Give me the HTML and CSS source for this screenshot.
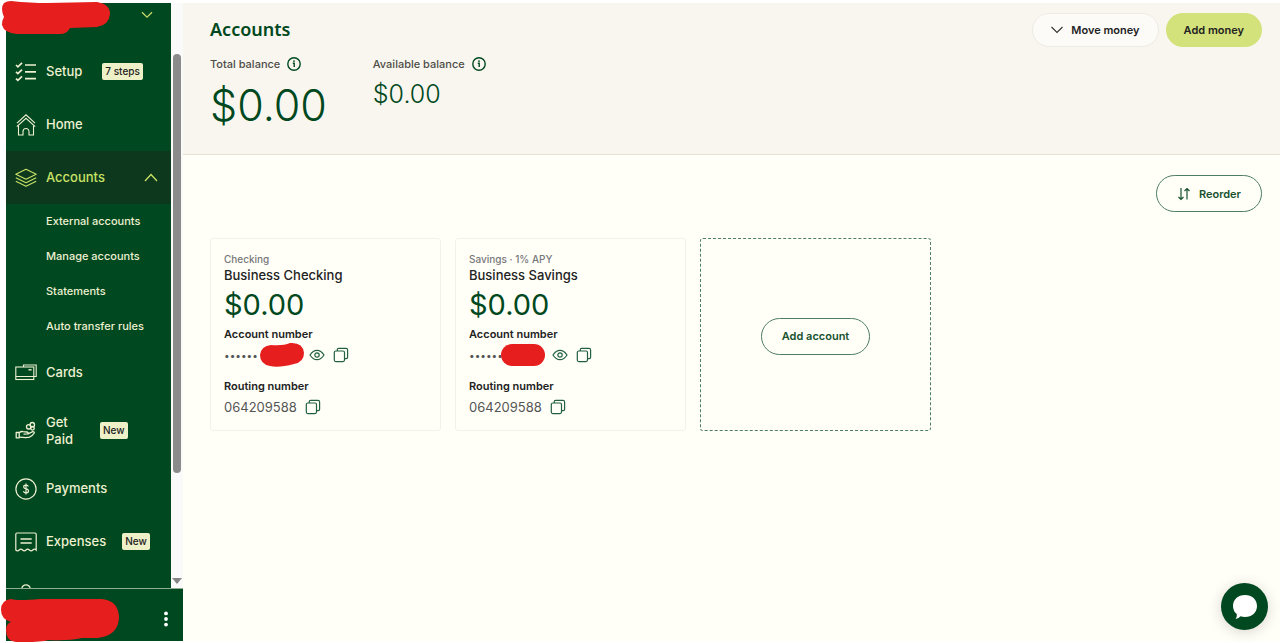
FILE: index.html
```html
<!DOCTYPE html>
<html lang="en">
<head>
<meta charset="utf-8">
<meta name="viewport" content="width=device-width, initial-scale=1">
<title>Accounts</title>
<link rel="stylesheet" href="styles.css">
</head>
<body>
<svg class="defs" width="0" height="0" aria-hidden="true">
  <symbol id="info" viewBox="0 0 14 14"><circle cx="7" cy="7" r="6.2" fill="none" stroke="currentColor" stroke-width="1.4"/><circle cx="7" cy="4.1" r=".9" fill="currentColor"/><path d="M5.8 6.3H7.2V10" fill="none" stroke="currentColor" stroke-width="1.4"/></symbol>
  <symbol id="eye" viewBox="0 0 16 16"><path d="M1 8Q4 3.3 8 3.3T15 8Q12 12.7 8 12.7T1 8Z" fill="none" stroke="currentColor" stroke-width="1.2"/><circle cx="8" cy="8" r="2.2" fill="none" stroke="currentColor" stroke-width="1.2"/></symbol>
  <symbol id="copy" viewBox="0 0 16 16"><rect x="1.3" y="4" width="10.2" height="10.6" rx="1.5" fill="none" stroke="currentColor" stroke-width="1.2"/><path d="M4.3 4V2.6Q4.3 1.3 5.6 1.3H13Q14.6 1.3 14.6 2.9V10.2Q14.6 11.6 13.2 11.6H11.5" fill="none" stroke="currentColor" stroke-width="1.2"/></symbol>
</svg>
<div class="app">
  <aside class="sidebar">
    <div class="scroller">
      <nav class="nav" aria-label="Main">
        <div class="company">
          <button class="plain" aria-label="Switch company"><svg width="12" height="8" viewBox="0 0 12 8"><path d="M1 1.2 6 6.2 11 1.2" fill="none" stroke="#c5dc68" stroke-width="1.3"/></svg></button>
          <svg class="mask mask-top" width="110" height="36" viewBox="0 0 110 36" aria-hidden="true"><path d="M10 1Q30 3 46 3L96 2Q109 4 109 14Q108 25 96 27L69 28Q66 34 59 34L16 34Q3 33 1 25Q1 20 3 17Q-1 8 3 3Q6 1 10 1Z" fill="#e61e1e"/></svg>
        </div>
        <a class="item" href="#">
          <svg class="icon" viewBox="0 0 22 22"><g fill="none" stroke="currentColor" stroke-width="1.7"><path d="M1 4 2.900 5.800 7 1.800M1 10.800 2.900 12.600 7 8.600M1 17.600 2.900 19.400 7 15.400"/><path d="M10 4H21M10 10.800H21M10 17.600H21"/></g></svg>
          <span class="label">Setup</span><span class="badge badge-far">7 steps</span>
        </a>
        <a class="item" href="#">
          <svg class="icon" viewBox="0 0 22 22"><g fill="none" stroke="currentColor" stroke-width="1.1"><path d="M2 9.200 11 .8 20 9.200"/><path d="M1.800 12.600 11 4.300 20.200 12.600"/><path d="M3.500 11.500V21H8V17.500A3 3 0 0 1 14 17.500V21H18.500V11.500"/></g></svg>
          <span class="label">Home</span>
        </a>
        <a class="item item-active" href="#" aria-current="page">
          <svg class="icon" viewBox="0 0 22 22"><g fill="none" stroke="currentColor" stroke-width="1.1" stroke-linejoin="round"><path d="M11 2.2 21.2 7.2 11 12.2.8 7.2Z"/><path d="M.8 10.7 11 15.7 21.2 10.7M.8 14.2 11 19.2 21.2 14.2"/></g></svg>
          <span class="label">Accounts</span>
          <svg class="caret" width="14" height="9" viewBox="0 0 14 9"><path d="M1 8 7 1.5 13 8" fill="none" stroke="currentColor" stroke-width="1.3"/></svg>
        </a>
        <div class="subnav">
          <a class="subitem" href="#">External accounts</a>
          <a class="subitem" href="#">Manage accounts</a>
          <a class="subitem" href="#">Statements</a>
          <a class="subitem" href="#">Auto transfer rules</a>
        </div>
        <a class="item" href="#">
          <svg class="icon" viewBox="0 0 22 22"><g fill="none" stroke="currentColor" stroke-width="1.1"><rect x=".8" y="5" width="18" height="12.500"/><path d="M.8 14.500H18.800M8.500 5V3H21.200V14.500H18.800"/></g><path d="M13.500 7.800H16.600" stroke="currentColor" stroke-width="1.4"/></svg>
          <span class="label">Cards</span>
        </a>
        <a class="item item-tall" href="#">
          <svg class="icon" viewBox="0 0 22 22"><g fill="none" stroke="currentColor" stroke-width="1.3" stroke-linejoin="round"><path d="M1.2 12.5H4.2V17.8H1.2Z"/><path d="M4.2 12.8Q6 11.2 8 11.6L12 12Q13.5 12.4 13 13.8L8.5 14.2M13 13.8 17.8 11.7Q19.5 11.5 19.3 13Q17.5 15.8 14.5 17.2Q12 18 4.2 17.2"/><circle cx="13.700" cy="6.800" r="2.200"/><circle cx="17.300" cy="4.700" r="2.200"/><circle cx="17.500" cy="8.300" r="1.800"/></g></svg>
          <span class="label label-narrow">Get Paid</span><span class="badge">New</span>
        </a>
        <a class="item" href="#">
          <svg class="icon" viewBox="0 0 22 22"><g fill="none" stroke="currentColor" stroke-width="1.2"><circle cx="11" cy="11" r="10.1"/><path d="M13.4 8.5Q12.8 7.2 11 7.2 8.7 7.2 8.7 9 8.7 10.5 11 10.9 13.5 11.3 13.5 13 13.5 14.9 11 14.9 9 14.9 8.4 13.3M11 5.6V16.4"/></g></svg>
          <span class="label">Payments</span>
        </a>
        <a class="item" href="#">
          <svg class="icon" viewBox="0 0 22 22"><g fill="none" stroke="currentColor" stroke-width="1.2"><path d="M.8 19V3.2Q.8 2 2 2H20Q21.2 2 21.2 3.2V19Q19.5 17.3 17.8 19T14.4 19T11 19T7.6 19T4.2 19T.8 19Z"/><path d="M5.500 8H16.700M5.500 12H16.700" stroke-width="1.400"/></g></svg>
          <span class="label">Expenses</span><span class="badge badge-end">New</span>
        </a>
        <a class="item" href="#" aria-label="More">
          <svg class="icon" viewBox="0 0 22 22"><g fill="none" stroke="currentColor" stroke-width="1.2"><circle cx="11" cy="5" r="4.2"/><path d="M3 21Q3 12 11 12T19 21Z"/></g></svg>
        </a>
      </nav>
      <div class="scrollbar" aria-hidden="true"><div class="thumb"></div><div class="arrow"></div></div>
    </div>
    <div class="profile">
      <button class="plain" aria-label="Profile menu"><svg width="6" height="16" viewBox="0 0 6 16" fill="#fff"><circle cx="3" cy="2.4" r="1.9"/><circle cx="3" cy="8" r="1.9"/><circle cx="3" cy="13.6" r="1.9"/></svg></button>
      <svg class="mask mask-bottom" width="120" height="45" viewBox="0 0 120 45" aria-hidden="true"><path d="M11 1Q18 3 40 1H102Q119 3 119 20Q118 38 97 40H82Q68 43 49 42Q40 44 26 44H16Q6 43 6 32Q6 26 11 24Q1 21 1 12Q1 2 11 1Z" fill="#e61e1e"/></svg>
    </div>
  </aside>
  <main class="main">
    <header class="header">
      <div class="summary">
        <h1 class="title">Accounts</h1>
        <div class="balances">
          <section>
            <h2 class="balance-label">Total balance <svg width="14" height="14"><use href="#info"/></svg></h2>
            <p class="total">$0.00</p>
          </section>
          <section>
            <h2 class="balance-label">Available balance <svg width="14" height="14"><use href="#info"/></svg></h2>
            <p class="available">$0.00</p>
          </section>
        </div>
      </div>
      <div class="actions">
        <button class="btn btn-light"><svg width="12" height="8" viewBox="0 0 12 8"><path d="M.5 1 6 6.5 11.5 1" fill="none" stroke="#333" stroke-width="1.1"/></svg>Move money</button>
        <button class="btn btn-lime">Add money</button>
      </div>
    </header>
    <div class="content">
      <div class="toolbar">
        <button class="btn btn-outline"><svg width="14" height="14" viewBox="0 0 14 14"><g fill="none" stroke="currentColor" stroke-width="1.2"><path d="M4 1V12.500M1.500 10 4 12.500 6.500 10M10 12.500V1.500M7.500 4 10 1.500 12.500 4"/></g></svg>Reorder</button>
      </div>
      <div class="cards">
        <article class="card">
          <p class="kind">Checking</p>
          <h3 class="name">Business Checking</h3>
          <p class="amount">$0.00</p>
          <h4 class="field">Account number</h4>
          <div class="value value-masked">
            <span class="dots">••••••</span>
            <svg class="scribble" width="46" height="26" viewBox="0 0 46 26" aria-hidden="true"><path d="M12 3Q24 4 31 1Q44 0 45 11Q45 20 35 22Q20 26 11 24Q1 22 1 13Q2 4 12 3Z" fill="#e61e1e"/></svg>
            <button class="plain" aria-label="Show account number"><svg width="16" height="16"><use href="#eye"/></svg></button>
            <button class="plain copy" aria-label="Copy account number"><svg width="16" height="16"><use href="#copy"/></svg></button>
          </div>
          <h4 class="field">Routing number</h4>
          <div class="value"><span>064209588</span><button class="plain copy" aria-label="Copy routing number"><svg width="16" height="16"><use href="#copy"/></svg></button></div>
        </article>
        <article class="card">
          <p class="kind">Savings · 1% APY</p>
          <h3 class="name">Business Savings</h3>
          <p class="amount">$0.00</p>
          <h4 class="field">Account number</h4>
          <div class="value value-masked">
            <span class="dots">••••••</span>
            <svg class="scribble scribble-low" width="44" height="22" viewBox="0 0 44 22" aria-hidden="true"><rect width="44" height="22" rx="11" fill="#e61e1e"/></svg>
            <button class="plain" aria-label="Show account number"><svg width="16" height="16"><use href="#eye"/></svg></button>
            <button class="plain copy" aria-label="Copy account number"><svg width="16" height="16"><use href="#copy"/></svg></button>
          </div>
          <h4 class="field">Routing number</h4>
          <div class="value"><span>064209588</span><button class="plain copy" aria-label="Copy routing number"><svg width="16" height="16"><use href="#copy"/></svg></button></div>
        </article>
        <div class="card card-new"><button class="btn btn-outline">Add account</button></div>
      </div>
    </div>
  </main>
</div>
<button class="chat" aria-label="Open chat"><svg width="26" height="26" viewBox="0 0 26 26"><path d="M13 1C20 1 25 5.500 25 12S20 23 13 23Q10.500 23 8.500 22.300Q7 24.500 3.500 25Q5.200 22.500 4.800 20Q1 17 1 12C1 5.500 6 1 13 1Z" fill="#fff"/></svg></button>
</body>
</html>
```
FILE: styles.css
```css
* { box-sizing: border-box; }
body {
  margin: 0;
  background: #fff;
  color: #222;
  font-family: Inter, "Liberation Sans", sans-serif;
  font-size: 11px;
}
h1, h2, h3, h4, p { margin: 0; }
svg { display: block; flex: none; }
a { color: inherit; text-decoration: none; }
button { font: inherit; cursor: pointer; }
.defs { position: absolute; }
.plain { display: flex; padding: 0; border: 0; background: none; color: inherit; }

.app { display: flex; height: 100vh; padding: 3px 0 2px 6px; }

.sidebar { display: flex; flex-direction: column; flex: none; width: 177px; color: #eef0d0; }
.scroller { display: flex; flex: 1; min-height: 0; }
.nav { flex: 1; overflow: hidden; background: #004820; }
.company { display: flex; justify-content: flex-end; height: 42px; padding: 8px 18px 0 0; }
.item { display: flex; align-items: center; height: 53px; padding: 0 13px 0 9px; }
.item-active { background: #0d381e; color: #c9e265; }
.item-tall { height: 63px; }
.icon { width: 22px; height: 22px; margin-right: 9px; }
.label { font-size: 13px; line-height: 17px; font-weight: 500; }
.label-narrow { width: 54px; padding-right: 16px; }
.badge {
  padding: 0 3px;
  border-radius: 2px;
  background: #eef0c8;
  color: #222;
  font-size: 10px;
  line-height: 17px;
  font-weight: 500;
}
.badge-far { margin-left: 20px; }
.badge-end { margin-left: 16px; }
.caret { margin-left: auto; }
.subnav { padding-bottom: 2px; }
.subitem { display: block; padding-left: 40px; font-size: 11px; line-height: 35px; font-weight: 500; }

.scrollbar { display: flex; flex-direction: column; justify-content: space-between; align-items: center; width: 12px; padding: 51px 0 4px; background: #fafafa; }
.thumb { width: 8px; height: 79%; border-radius: 4px; background: #8b8b8b; }
.arrow { border: 5px solid transparent; border-top: 6px solid #858585; border-bottom: 0; }

.profile { position: relative; display: flex; align-items: center; justify-content: flex-end; height: 53px; padding: 7px 14px 0 0; border-top: 1px solid #8fae91; background: #004820; }
.mask { position: absolute; }
.mask-top { left: 1px; top: 0; }
.mask-bottom { left: -6px; top: 9px; }

.main { display: flex; flex-direction: column; flex: 1; min-width: 0; background: #fffff8; }
.header { display: flex; justify-content: space-between; height: 152px; padding: 10px 18px 0 27px; border-bottom: 1px solid #e6e3d3; background: #f9f6ef; }
.title { padding-top: 4px; color: #004820; font-family: "Noto Sans", sans-serif; font-size: 18px; line-height: 24px; font-weight: 600; }
.balances { display: flex; gap: 46px; padding-top: 14px; }
.balance-label { display: flex; align-items: center; gap: 7px; color: #4d4d49; font-size: 11px; line-height: 18px; font-weight: 500; }
.balance-label svg { color: #004820; }
.total { padding-top: 7px; color: #004820; font-size: 43px; line-height: 50px; font-weight: 300; }
.available { padding-top: 7px; color: #004820; font-size: 25px; line-height: 28px; font-weight: 300; }
.actions { display: flex; align-items: flex-start; gap: 7px; }

.btn { display: flex; align-items: center; justify-content: center; height: 34px; padding: 0 18px; border: 0; border-radius: 19px; font-size: 11px; font-weight: 600; }
.btn svg { margin-right: 8px; }
.btn-light { border: 1px solid #eeebe4; background: #fcfbf8; color: #222; }
.btn-lime { background: #d3e27a; color: #222; }
.btn-outline { height: 37px; padding: 0 20px; border: 1px solid #4e7d61; background: #fffff8; color: #17512f; }

.content { padding: 20px 18px 0 27px; }
.toolbar { display: flex; justify-content: flex-end; }
.cards { display: flex; gap: 14px; padding-top: 26px; }
.card { width: 231px; padding: 13px 13px 10px; border: 1px solid #f3f2ea; border-radius: 3px; }
.card-new { display: flex; align-items: center; justify-content: center; border: 1px dashed #4e7d61; }
.kind { color: #77777a; font-size: 10px; line-height: 14px; font-weight: 500; }
.name { font-size: 13px; line-height: 18px; font-weight: 500; }
.amount { padding: 4px 0; color: #004820; font-size: 29px; line-height: 34px; font-weight: 400; }
.field { font-size: 11px; line-height: 16px; font-weight: 600; }
.value { display: flex; align-items: center; height: 26px; color: #555; font-size: 13px; font-weight: 400; }
.value .plain { color: #22603f; }
.value-masked { margin-bottom: 10px; }
.value .copy { margin-left: 8px; }
.dots { flex: none; width: 35px; font-size: 10px; }
.scribble { margin-right: 4px; }
.scribble-low { margin: 0 7px 0 -3px; }

.chat {
  position: fixed;
  right: 12px;
  bottom: 13px;
  display: flex;
  align-items: center;
  justify-content: center;
  width: 47px;
  height: 47px;
  padding: 0;
  border: 0;
  border-radius: 50%;
  background: #004820;
  box-shadow: 0 2px 14px rgba(0, 0, 0, .16);
}
```
